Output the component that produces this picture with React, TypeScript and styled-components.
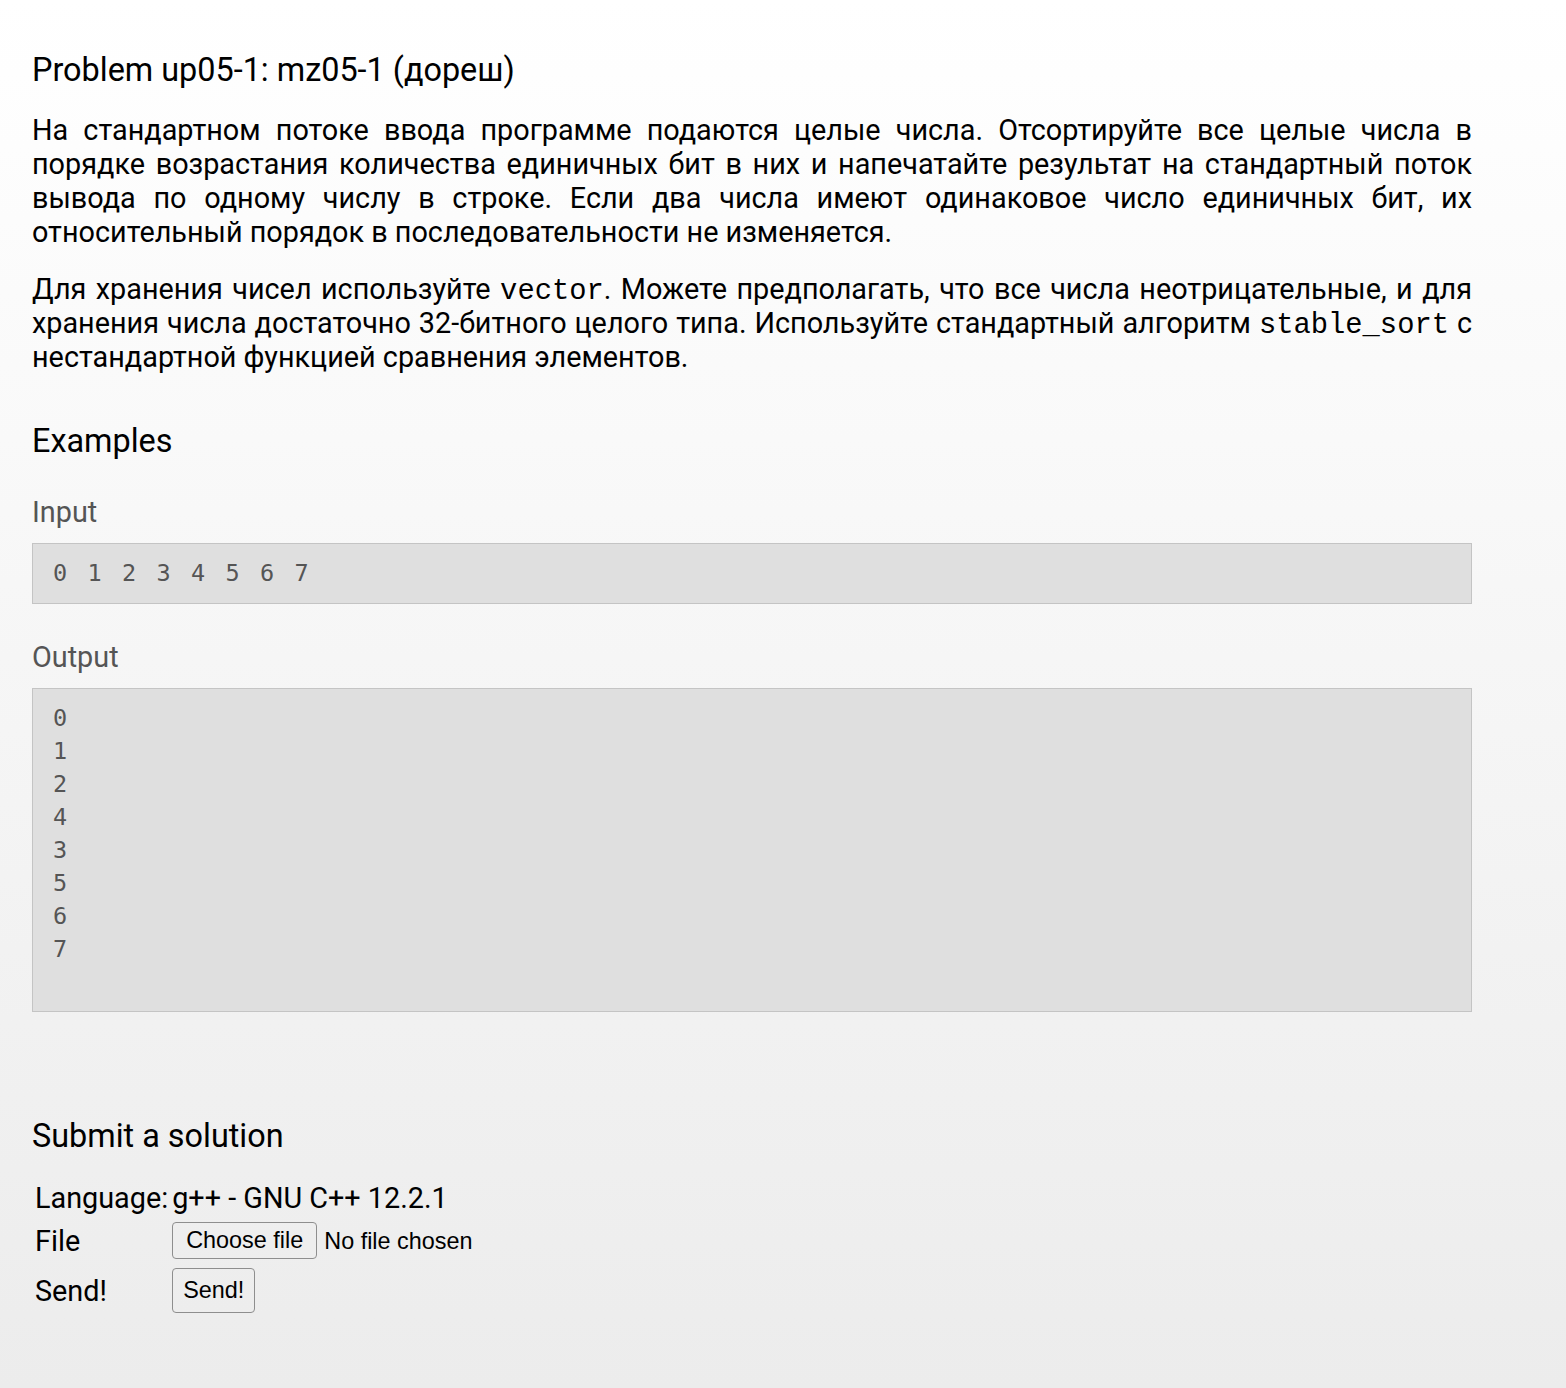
import styled, { createGlobalStyle } from "styled-components";
import { FC } from "react";

const GlobalStyle = createGlobalStyle`
    html, body {
        margin: 0;
        padding: 0;
    }
    body {
        min-height: 1388px;
        background: linear-gradient(to bottom, #ffffff 0%, #ececec 100%);
        font-family: Roboto, "Liberation Sans", Arial, sans-serif;
        color: #000;
    }
`;

const Page = styled['main']`
    width: 1440px;
    padding: 51px 32px 60px;
`;

const Title = styled['h2']`
    margin: 0 0 24px;
    font-size: 32.4px;
    font-weight: 400;
    line-height: 38px;
`;

const Statement = styled['p']`
    margin: 0 0 23px;
    font-size: 28.8px;
    line-height: 34px;
    text-align: justify;
`;

const Code = styled['code']`
    font-family: "Liberation Mono", "Courier New", monospace;
    font-size: 28.8px;
    line-height: 0;
`;

const SectionTitle = styled['h3']<{ $top: number }>`
    margin: ${(p) => p.$top}px 0 0;
    font-size: 32.4px;
    font-weight: 400;
    line-height: 38px;
`;

const Label = styled['h4']`
    margin: 35px 0 14px;
    font-size: 28.8px;
    font-weight: 400;
    line-height: 34px;
    color: #555;
`;

const Sample = styled['pre']<{ $bottom?: number }>`
    margin: 0 0 36px;
    padding: 13px 20px ${(p) => p.$bottom ?? 13}px;
    background: #dfdfdf;
    border: 1px solid #c4c4c4;
    font-family: "DejaVu Sans Mono", monospace;
    font-size: 23.5px;
    letter-spacing: 3.1px;
    line-height: 33px;
    color: #555;
    white-space: pre;
`;

const FormTable = styled['table']`
    margin-top: 20px;
    border-spacing: 2px;
    font-size: 28.8px;
`;

const Cell = styled['td']<{ $h: number }>`
    height: ${(p) => p.$h}px;
    padding: 0 1px;
    vertical-align: middle;
    line-height: 34px;
`;

const FileBox = styled['div']`
    display: flex;
    align-items: center;
    gap: 7px;
    font-family: "Liberation Sans", Arial, sans-serif;
    font-size: 23.4px;
`;

const Button = styled['button']<{ $h: number; $px: number }>`
    display: block;
    height: ${(p) => p.$h}px;
    padding: 0 ${(p) => p.$px}px;
    font-family: "Liberation Sans", Arial, sans-serif;
    font-size: 23.4px;
    color: #000;
    background: transparent;
    border: 1px solid #8e8e8e;
    border-radius: 4px;
`;

interface ISampleBlock {
    label: string;
    text: string;
    bottom?: number;
}

const SampleBlock: FC<ISampleBlock> = ({ label, text, bottom }) => (
    <section>
        <Label>{label}</Label>
        <Sample $bottom={bottom}>{text}</Sample>
    </section>
);

const App: FC = () => {
    return (
        <>
            <GlobalStyle />
            <Page>
                <Title>Problem up05-1: mz05-1 (дореш)</Title>
                <Statement>
                    На стандартном потоке ввода программе подаются целые числа. Отсортируйте все целые числа в порядке
                    возрастания количества единичных бит в них и напечатайте результат на стандартный поток вывода по
                    одному числу в строке. Если два числа имеют одинаковое число единичных бит, их относительный порядок
                    в последовательности не изменяется.
                </Statement>
                <Statement>
                    Для хранения чисел используйте <Code>vector</Code>. Можете предполагать, что все числа
                    неотрицательные, и для хранения числа достаточно 32-битного целого типа. Используйте стандартный
                    алгоритм <Code>stable_sort</Code> с нестандартной функцией сравнения элементов.
                </Statement>

                <SectionTitle $top={48}>Examples</SectionTitle>
                <SampleBlock label="Input" text="0 1 2 3 4 5 6 7" />
                <SampleBlock label="Output" text={"0\n1\n2\n4\n3\n5\n6\n7"} bottom={45} />

                <SectionTitle $top={105}>Submit a solution</SectionTitle>
                <FormTable>
                    <tbody>
                        <tr>
                            <Cell $h={41}>Language:</Cell>
                            <Cell $h={41}>g++ - GNU C++ 12.2.1</Cell>
                        </tr>
                        <tr>
                            <Cell $h={41}>File</Cell>
                            <Cell $h={41}>
                                <FileBox>
                                    <Button $h={37} $px={13} type="button">Choose file</Button>
                                    <span>No file chosen</span>
                                </FileBox>
                            </Cell>
                        </tr>
                        <tr>
                            <Cell $h={55}>Send!</Cell>
                            <Cell $h={55}>
                                <Button $h={45} $px={10} type="button">Send!</Button>
                            </Cell>
                        </tr>
                    </tbody>
                </FormTable>
            </Page>
        </>
    );
};

export default App;
